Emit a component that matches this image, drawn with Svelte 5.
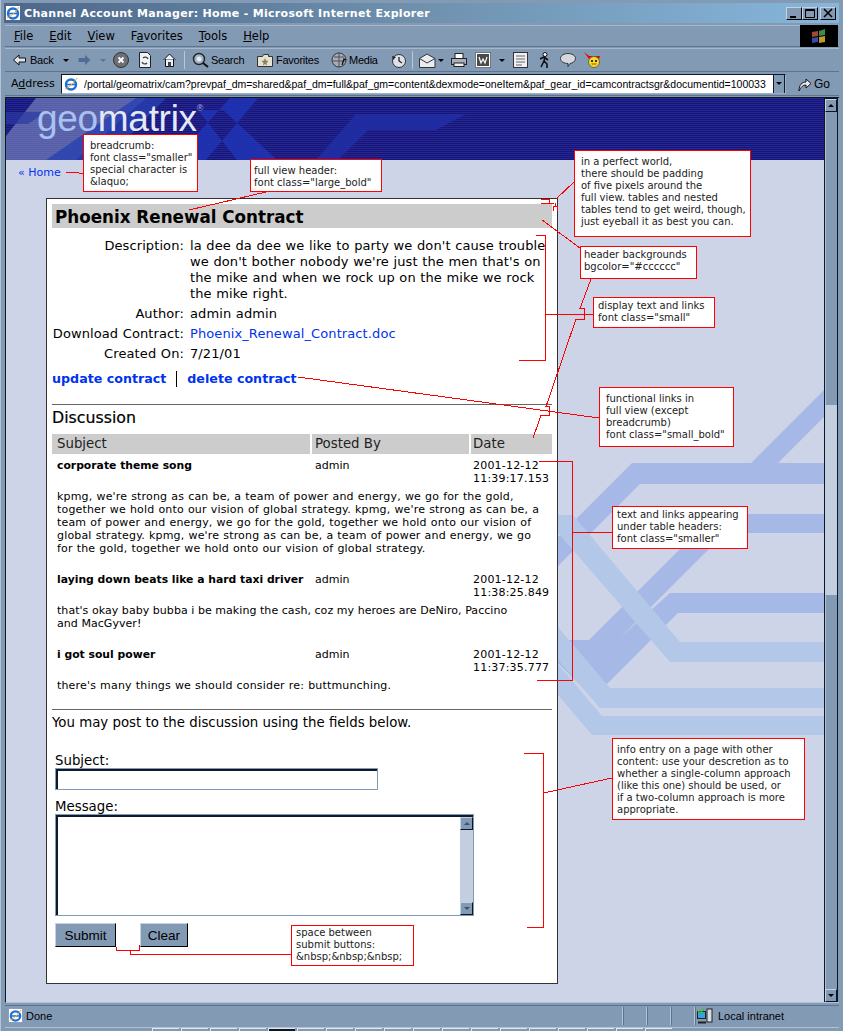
<script lang="ts">
	// IE6 window showing the annotated "full view" wireframe. Window chrome and the
	// page are ordinary flow; the red notes and leader lines sit on top of it.
	const addressUrl =
		'/portal/geomatrix/cam?prevpaf_dm=shared&paf_dm=full&paf_gm=content&dexmode=oneItem&paf_gear_id=camcontractsgr&documentid=100033';

	const posts = [
		{
			subject: 'corporate theme song',
			author: 'admin',
			date: '2001-12-12',
			time: '11:39:17.153',
			body: [
				"kpmg, we're strong as can be, a team of power and energy, we go for the gold,",
				"together we hold onto our vision of global strategy. kpmg, we're strong as can be, a",
				'team of power and energy, we go for the gold, together we hold onto our vision of',
				"global strategy. kpmg, we're strong as can be, a team of power and energy, we go",
				'for the gold, together we hold onto our vision of global strategy.'
			]
		},
		{
			subject: 'laying down beats like a hard taxi driver',
			author: 'admin',
			date: '2001-12-12',
			time: '11:38:25.849',
			tight: true,
			body: ["that's okay baby bubba i be making the cash, coz my heroes are DeNiro, Paccino", 'and MacGyver!']
		},
		{
			subject: 'i got soul power',
			author: 'admin',
			date: '2001-12-12',
			time: '11:37:35.777',
			body: ["there's many things we should consider re: buttmunching."]
		}
	];

	const taskTabs = Array(18).fill(0);
</script>

{#snippet ieLogo(size)}
	<svg width={size} height={size} viewBox="0 0 16 16">
		<rect x="1" y="1" width="14" height="14" fill="#fff" />
		<circle cx="8" cy="8.5" r="5" fill="none" stroke="#1f6fd6" stroke-width="2.4" />
		<path d="M3 8.5h10" stroke="#1f6fd6" stroke-width="1.6" />
		<path d="M2 13C5 12 11 7 14 2" stroke="#e8b030" stroke-width="1" fill="none" />
	</svg>
{/snippet}

<div class="window">
	<div class="titlebar">
		<span class="title-icon">{@render ieLogo(16)}</span>
		<span class="title-text">Channel Account Manager: Home - Microsoft Internet Explorer</span>
		<span class="winbtns">
			<span class="winbtn"><svg width="14" height="11" viewBox="0 0 14 11"><rect x="3" y="8" width="6" height="2" /></svg></span>
			<span class="winbtn"><svg width="14" height="11" viewBox="0 0 14 11"><path d="M2.5 1.5h9v8h-9zM2.5 2.5h9" fill="none" stroke="#000" /></svg></span>
			<span class="winbtn close"><svg width="14" height="11" viewBox="0 0 14 11"><path d="M3 1l8 8M11 1l-8 8" stroke="#000" stroke-width="1.6" /></svg></span>
		</span>
	</div>

	<div class="menubar">
		<span class="m-file"><u>F</u>ile</span>
		<span class="m-item"><u>E</u>dit</span>
		<span class="m-item"><u>V</u>iew</span>
		<span class="m-item">F<u>a</u>vorites</span>
		<span class="m-item"><u>T</u>ools</span>
		<span class="m-item"><u>H</u>elp</span>
		<span class="flagbox">
			<svg width="18" height="16" viewBox="0 0 18 16">
				<path d="M2 4l6-1v5l-6 1z" fill="#a8442f" />
				<path d="M9 3l6-2v6l-6 1z" fill="#3f8a44" />
				<path d="M2 10l6-1v5l-6 1z" fill="#2f4fa8" />
				<path d="M9 9l6-1v6l-6 1z" fill="#c09a30" />
			</svg>
		</span>
	</div>

	<div class="toolbar">
		<svg class="tool" width="13" height="12" viewBox="0 0 13 12"><path d="M.5 6L6 1v3h6.500v4H6v3z" fill="#dfe5ee" stroke="#111" /></svg>
		<span class="lbl w27 m4">Back</span>
		<span class="caret m6"></span>
		<svg class="tool m9" width="13" height="12" viewBox="0 0 13 12"><path d="M12.500 6L7 1v3H.5v4H7v3z" fill="#4f6d96" /></svg>
		<span class="caret dim m9"></span>
		<svg class="tool m7" width="16" height="16" viewBox="0 0 16 16"><circle cx="8" cy="8" r="7.500" fill="#6d6f74" stroke="#333" /><path d="M5.500 5.500l5 5M10.500 5.500l-5 5" stroke="#fff" stroke-width="1.800" /></svg>
		<svg class="tool m10" width="12" height="16" viewBox="0 0 12 16"><path d="M.5.500h8l3 3v12H.5z" fill="#eef1f5" stroke="#222" /><path d="M4 6a3 3 0 0 1 5 1M8 11a3 3 0 0 1-5-1" fill="none" stroke="#444" stroke-width="1.300" /></svg>
		<svg class="tool m12" width="13" height="14" viewBox="0 0 13 14"><path d="M.5 7L6.500 1l6 6M2.500 6v7.500h8V6" fill="#eef1f5" stroke="#111" /><rect x="5" y="9" width="3" height="4.500" fill="#444" /></svg>
		<span class="sep m8"></span>
		<svg class="tool m7" width="17" height="16" viewBox="0 0 17 16"><circle cx="7" cy="7" r="5.500" fill="#9fb0c4" stroke="#222" stroke-width="1.400" /><circle cx="7" cy="7" r="2.500" fill="#e6ebf2" /><path d="M11 11l5 4" stroke="#111" stroke-width="2" /></svg>
		<span class="lbl w40 m2">Search</span>
		<svg class="tool m6" width="16" height="14" viewBox="0 0 16 14"><path d="M.5 3.500h5l1-2h5v2h4v10H.5z" fill="#e6e2cc" stroke="#333" /><path d="M8 5l1 2.500 2.500.5L9.500 10l.5 2.500L8 11l-2 1.500.5-2.500L4.500 8 7 7.500z" fill="#8a8060" /></svg>
		<span class="lbl w48 m3">Favorites</span>
		<svg class="tool m7" width="16" height="16" viewBox="0 0 16 16"><circle cx="8" cy="8" r="7" fill="#a8adb5" stroke="#333" /><path d="M3 5h10M2 9h12M8 1v14" stroke="#4d535c" /><path d="M11 13l2-6 2 1" fill="none" stroke="#111" stroke-width="1.300" /></svg>
		<span class="lbl w36 m2">Media</span>
		<svg class="tool m6" width="15" height="15" viewBox="0 0 15 15"><circle cx="8" cy="8" r="6.500" fill="#dde2e8" stroke="#333" /><path d="M8 4v4l3 2" fill="none" stroke="#222" stroke-width="1.300" /><path d="M1 3l4 1-3 3z" fill="#222" /></svg>
		<span class="sep m6"></span>
		<svg class="tool m6" width="17" height="15" viewBox="0 0 17 15"><path d="M.5 5.500L8 1l8 4.500v9H.5z" fill="#e8ebef" stroke="#333" /><path d="M.5 5.500L8 10l8-4.500" fill="none" stroke="#333" /></svg>
		<span class="caret m2"></span>
		<svg class="tool m7" width="16" height="14" viewBox="0 0 16 14"><rect x="4" y=".5" width="8" height="5" fill="#fff" stroke="#222" /><rect x=".5" y="5.500" width="15" height="6" fill="#a9b0ba" stroke="#222" /><rect x="3" y="10" width="10" height="3.500" fill="#eee" stroke="#222" /></svg>
		<svg class="tool m8" width="16" height="16" viewBox="0 0 16 16"><rect x=".5" y=".5" width="15" height="15" fill="#fff" stroke="#222" stroke-dasharray="1 1" /><rect x="2" y="2" width="12" height="12" fill="#4a4a4a" /><path d="M4 5l2 6 2-4 2 4 2-6" fill="none" stroke="#fff" stroke-width="1.200" /></svg>
		<span class="caret m8"></span>
		<svg class="tool m8" width="15" height="16" viewBox="0 0 15 16"><rect x=".5" y=".5" width="14" height="15" fill="#eef0f3" stroke="#333" /><path d="M3 4h9M3 7h9M3 10h9M3 13h6" stroke="#666" /></svg>
		<svg class="tool m10" width="13" height="16" viewBox="0 0 13 16"><circle cx="7" cy="2.500" r="2" fill="#fff" stroke="#111" /><path d="M7 5L6 9l3 3v4M6 9l-3 6M2 7l4-2 4 3" fill="none" stroke="#111" stroke-width="1.600" /></svg>
		<svg class="tool m9" width="16" height="14" viewBox="0 0 16 14"><path d="M8 .5c4 0 7.500 2 7.500 5S12 10.500 10 10.500L8 13.500v-3c-4 0-7.500-2-7.500-5S4 .5 8 .5z" fill="#d4d8de" stroke="#333" /></svg>
		<svg class="tool m8" width="17" height="16" viewBox="0 0 17 16"><path d="M0 0l5 4h11l-1 3H5z" fill="#e00" /><circle cx="10" cy="10" r="5.500" fill="#f4e020" stroke="#665" /><circle cx="8" cy="9" r="1" /><circle cx="12" cy="9" r="1" /><path d="M7.500 12h5" stroke="#c33" /></svg>
	</div>

	<div class="addressbar">
		<span class="addr-label">A<u>d</u>dress</span>
		<div class="addr-box">
			<span class="addr-icon">{@render ieLogo(16)}</span>
			<span class="addr-url">{addressUrl}</span>
			<span class="addr-drop"><i></i></span>
		</div>
		<span class="go">
			<svg width="14" height="16" viewBox="0 0 14 16"><path d="M1 15c0-6 3-9 7-9V3l5 4.500L8 12V9c-3 0-5 2-7 6z" fill="#e8ebef" stroke="#111" /></svg>
			Go
		</span>
	</div>

	<div class="viewport">
		<div class="page">
			<svg class="backdrop" width="818" height="905" viewBox="6 98 818 905">
				<g fill="#a6b9e6">
					<path d="M824 390v27l-46 46h46v21H640l-82 82v-29l74-74h119z" />
					<path d="M715 514H824v19H725L598 660H558v-20h31z" />
					<path d="M670 593H824v20H678l-72 72H580l-22-22v-3h37z" />
				</g>
				<g fill="#b3c8e8">
					<path d="M558 515h15l107 127h144v20H670L558 533z" />
					<path d="M558 627l52 61h214v20H600l-42-48z" />
					<path d="M558 664l44 52h222v19H592l-34-40z" />
				</g>
			</svg>

			<div class="banner">
				<svg class="banner-art" width="818" height="62" viewBox="0 0 818 62">
					<path d="M30 0h110L70 62H0V38z" fill="#8d9cc8" opacity=".55" />
					<path d="M0 14h40L22 26H0z" fill="#2a3aa0" opacity=".7" />
					<path d="M130 0h30l-60 62H40z" fill="#2840b0" opacity=".8" />
					<path d="M192 12h25l54 50h-40zM252 0h-28l-56 62h32z" fill="#1f36b8" opacity=".8" />
					<path d="M350 16h110l-30 16H362l-30 30h-22z" fill="#2030a8" opacity=".8" />
				</svg>
				<span class="logo"><span class="logo-geo">geo</span>matrix<sup>®</sup></span>
			</div>

			<div class="crumb"><a href="#home">« Home</a></div>

			<div class="card">
				<h1>Phoenix Renewal Contract</h1>

				<dl class="details">
					<dt>Description:</dt>
					<dd>
						la dee da dee we like to party we don't cause trouble<br />we don't bother nobody we're just the men that's on<br />the mike and when we rock up on the mike we rock<br />the mike right.
					</dd>
					<dt>Author:</dt>
					<dd>admin admin</dd>
					<dt>Download Contract:</dt>
					<dd><a href="#doc">Phoenix_Renewal_Contract.doc</a></dd>
					<dt>Created On:</dt>
					<dd>7/21/01</dd>
				</dl>

				<div class="actions">
					<a href="#update">update contract</a>
					<span class="divider"></span>
					<a href="#delete">delete contract</a>
				</div>

				<hr class="rule-a" />
				<h2>Discussion</h2>

				<div class="thead">
					<div>Subject</div>
					<div>Posted By</div>
					<div>Date</div>
				</div>

				{#each posts as post}
					<div class="post">
						<div class="post-head">
							<b>{post.subject}</b>
							<span>{post.author}</span>
							<span class="stamp">{post.date}<br />{post.time}</span>
						</div>
						<p class:tight={post.tight}>
							{#each post.body as line}{line}<br />{/each}
						</p>
					</div>
				{/each}

				<hr class="rule-b" />
				<p class="invite">You may post to the discussion using the fields below.</p>

				<form class="entry">
					<label for="subject">Subject:</label>
					<input id="subject" type="text" />
					<label for="message" class="msg-label">Message:</label>
					<div class="textbox">
						<textarea id="message"></textarea>
						<div class="textbox-scroll">
							<span class="sbtn"><i class="up"></i></span>
							<span class="sbtn"><i class="down"></i></span>
						</div>
					</div>
					<div class="buttons">
						<button type="button" class="submit">Submit</button>
						<button type="button" class="clear">Clear</button>
					</div>
				</form>
			</div>
		</div>

		<div class="scrollbar">
			<span class="sbtn big"><i class="up"></i></span>
			<span class="thumb a"></span>
			<span class="track"></span>
			<span class="thumb b"></span>
			<span class="sbtn big"><i class="down"></i></span>
		</div>
	</div>

	<div class="statusbar">
		<span class="status-icon">{@render ieLogo(15)}</span>
		<span class="status-text">Done</span>
		<span class="panel p1"></span>
		<span class="panel p2"></span>
		<span class="panel p3"></span>
		<span class="panel zone">
			<svg width="16" height="16" viewBox="0 0 16 16"><rect x=".5" y="3.500" width="8" height="7" fill="#3aa0e0" stroke="#222" /><rect x="10" y="1" width="5" height="13" fill="#d8dde4" stroke="#222" /><path d="M1 14.500h8" stroke="#222" stroke-width="2" /><path d="M1 3l2 2 4-4" stroke="#2c2" stroke-width="1.500" fill="none" /></svg>
			<span>Local intranet</span>
		</span>
	</div>

	<div class="taskstrip">
		{#each taskTabs as _, i}
			<span class="tab" class:on={i === 4}></span>
		{/each}
	</div>

	<!-- leader lines of the annotations -->
	<svg class="leaders" width="843" height="1031" viewBox="0 0 843 1031">
		<g fill="none" stroke="#f00" stroke-width="1" shape-rendering="crispEdges">
			<path d="M65.500 172.500h9l9 1" />
			<path d="M189 210L266 192" />
			<path d="M541 199.500h8v3.500h-8M549 203h4.500M553.500 211v-5h4v5M555.500 206v-3" />
			<path d="M556 199L574 182" />
			<path d="M542 220L580 248" />
			<path d="M536 235.500h9.500V360.500H519M545.500 314.500H593" />
			<path d="M591 279L580 308.500h4.500v10.500H576L546 406.500h3.500V415.500H541L533 438" />
			<path d="M298 377L599 418" />
			<path d="M539 461.500h33.500V680.500H537M572.500 532.500H612" />
			<path d="M524 753.500h19.500V927.500H527M543.500 793L612 778" />
			<path d="M116.500 947v3.500h22.500V945M130.500 950.500v4H291" />
		</g>
	</svg>

	<div class="note n-crumb">breadcrumb:<br />font class="smaller"<br />special character is<br />&amp;laquo;</div>
	<div class="note n-header">full view header:<br />font class="large_bold"</div>
	<div class="note n-padding">in a perfect world,<br />there should be padding<br />of five pixels around the<br />full view. tables and nested<br />tables tend to get weird, though,<br />just eyeball it as best you can.</div>
	<div class="note n-bg">header backgrounds<br />bgcolor="#cccccc"</div>
	<div class="note n-display">display text and links<br />font class="small"</div>
	<div class="note n-func">functional links in<br />full view (except<br />breadcrumb)<br />font class="small_bold"</div>
	<div class="note n-under">text and links appearing<br />under table headers:<br />font class="smaller"</div>
	<div class="note n-info">info entry on a page with other<br />content: use your descretion as to<br />whether a single-column approach<br />(like this one) should be used, or<br />if a two-column approach is more<br />appropriate.</div>
	<div class="note n-space">space between<br />submit buttons:<br />&amp;nbsp;&amp;nbsp;&amp;nbsp;</div>
</div>

<style>
	:global(body) {
		margin: 0;
		background: #839ab5;
	}
	.window {
		position: relative;
		display: flex;
		flex-direction: column;
		width: 843px;
		height: 1031px;
		box-sizing: border-box;
		padding: 3px 4px 0;
		overflow: hidden;
		background: #839ab5;
		border-left: 1px solid #b4c2d4;
		font-family: 'DejaVu Sans', sans-serif;
		color: #000;
	}
	.window > * {
		flex: none;
	}

	/* title bar */
	.titlebar {
		display: flex;
		align-items: center;
		height: 20px;
		margin-left: -1px;
		background: linear-gradient(90deg, #4c678a, #6f91ae 50%, #86b6da);
		color: #fff;
	}
	.title-icon {
		display: flex;
		margin-left: 1px;
	}
	.title-text {
		margin-left: 3px;
		font-size: 11px;
		font-weight: 700;
		letter-spacing: 0.32px;
	}
	.winbtns {
		display: flex;
		margin-left: auto;
		margin-right: 3px;
	}
	.winbtn {
		display: flex;
		width: 16px;
		height: 13px;
		box-sizing: border-box;
		background: #839ab5;
		border: 1px solid;
		border-color: #c6d2e0 #000 #000 #c6d2e0;
	}
	.winbtn svg {
		fill: #000;
	}
	.winbtn.close {
		margin-left: 2px;
	}

	/* menu */
	.menubar {
		display: flex;
		align-items: center;
		height: 22px;
		margin-top: 2px;
		border-top: 1px solid #a8b8cc;
		border-bottom: 1px solid #5d7490;
		font-size: 11.5px;
		box-sizing: border-box;
	}
	.m-file {
		margin-left: 9px;
	}
	.m-item {
		margin-left: 16px;
	}
	.flagbox {
		display: flex;
		align-items: center;
		justify-content: center;
		width: 38px;
		height: 22px;
		margin-left: auto;
		margin-right: 1px;
		background: #000;
	}

	/* toolbar */
	.toolbar {
		display: flex;
		align-items: center;
		height: 24px;
		margin-top: 1px;
		padding-left: 8px;
		box-sizing: border-box;
		border-top: 1px solid #a8b8cc;
		border-bottom: 1px solid #5d7490;
	}
	.tool {
		flex: none;
	}
	.lbl {
		flex: none;
		font-family: 'Liberation Sans', sans-serif;
		font-size: 11px;
		line-height: 16px;
		letter-spacing: -0.25px;
	}
	.w27 { width: 27px; }
	.w36 { width: 36px; }
	.w40 { width: 40px; }
	.w48 { width: 48px; }
	.m2 { margin-left: 2px; }
	.m3 { margin-left: 3px; }
	.m4 { margin-left: 4px; }
	.m6 { margin-left: 6px; }
	.m7 { margin-left: 7px; }
	.m8 { margin-left: 8px; }
	.m9 { margin-left: 9px; }
	.m10 { margin-left: 10px; }
	.m12 { margin-left: 12px; }
	.caret {
		flex: none;
		width: 0;
		height: 0;
		border: 3px solid transparent;
		border-top: 3px solid #000;
		border-bottom: 0;
	}
	.caret.dim {
		border-top-color: #5c7391;
	}
	.sep {
		flex: none;
		width: 1px;
		height: 18px;
		background: #b8c6d6;
	}

	/* address */
	.addressbar {
		display: flex;
		align-items: center;
		height: 24px;
		border-bottom: 1px solid #5d7490;
		box-sizing: border-box;
	}
	.addr-label {
		width: 50px;
		margin-left: 6px;
		font-size: 11px;
	}
	.addr-box {
		display: flex;
		align-items: center;
		width: 725px;
		height: 20px;
		box-sizing: border-box;
		background: #fff;
		border: 1px solid;
		border-color: #0e1a2c #9fb0c4 #9fb0c4 #0e1a2c;
	}
	.addr-icon {
		display: flex;
		margin-left: 1px;
	}
	.addr-url {
		flex: 1;
		min-width: 0;
		margin-left: 5px;
		overflow: hidden;
		white-space: nowrap;
		font-family: 'Liberation Sans', sans-serif;
		font-size: 10.5px;
	}
	.addr-drop {
		display: flex;
		flex: none;
		align-items: center;
		justify-content: center;
		width: 12px;
		height: 18px;
		background: #839ab5;
		border-left: 1px solid #0e1a2c;
		border-right: 1px solid #0e1a2c;
		box-sizing: border-box;
	}
	.addr-drop i {
		border: 3px solid transparent;
		border-top: 3px solid #000;
		border-bottom: 0;
	}
	.go {
		display: flex;
		align-items: center;
		gap: 2px;
		margin-left: 12px;
		font-family: 'Liberation Sans', sans-serif;
		font-size: 12px;
	}

	/* browser viewport */
	.viewport {
		display: flex;
		height: 906px;
		margin: 1px 0 0 0;
		box-sizing: border-box;
		border-top: 1px solid #0c1626;
		border-left: 1px solid #0c1626;
		border-bottom: 1px solid #b4c2d4;
		overflow: hidden;
	}
	.page {
		position: relative;
		flex: none;
		width: 818px;
		background: #ced4e8;
	}
	.backdrop {
		position: absolute;
		top: 0;
		left: 0;
	}
	.banner {
		position: relative;
		height: 62px;
		overflow: hidden;
		background: repeating-linear-gradient(0deg, #16167a 0 1px, #262690 1px 2px);
	}
	.banner-art {
		position: absolute;
		top: 0;
		left: 0;
	}
	.logo {
		position: absolute;
		left: 31px;
		top: 0;
		font-family: 'Liberation Sans', sans-serif;
		font-size: 37px;
		line-height: 42px;
		color: #e4e9f6;
		letter-spacing: -0.3px;
	}
	.logo-geo {
		color: #a9c2f2;
	}
	.logo sup {
		position: absolute;
		top: 5px;
		font-size: 9px;
		line-height: 10px;
		color: #9fb0dc;
	}
	.crumb {
		position: relative;
		height: 16px;
		margin-top: 5px;
		padding-left: 12px;
		font-size: 11px;
		line-height: 16px;
	}
	a {
		color: #0033ee;
		text-decoration: none;
	}
	.card {
		position: relative;
		width: 512px;
		height: 786px;
		box-sizing: border-box;
		margin: 17px 0 0 40px;
		padding: 5px;
		background: #fff;
		border: 1px solid #333;
		font-size: 13.33px;
		line-height: 16px;
	}
	h1 {
		height: 24px;
		margin: 0;
		padding-left: 3px;
		background: #ccc;
		font-size: 16.75px;
		line-height: 27px;
		font-weight: 700;
	}
	.details {
		display: grid;
		grid-template-columns: 132px 1fr;
		column-gap: 6px;
		row-gap: 4px;
		margin: 9px 0 0;
		padding-top: 1px;
		font-size: 13px;
		letter-spacing: 0.1px;
		word-spacing: 0.35px;
	}
	.details dt {
		text-align: right;
		white-space: nowrap;
	}
	.details dd {
		margin: 0;
		white-space: nowrap;
	}
	.actions {
		display: flex;
		align-items: center;
		height: 16px;
		margin-top: 9px;
		font-size: 12.67px;
		font-weight: 700;
	}
	.divider {
		width: 1px;
		height: 16px;
		margin: 0 10px;
		background: #000;
	}
	hr {
		height: 1px;
		margin: 0;
		border: 0;
		background: #666;
	}
	.rule-a {
		margin-top: 17px;
	}
	h2 {
		margin: 5px 0 0;
		font-size: 15.8px;
		line-height: 16px;
		font-weight: 400;
		-webkit-text-stroke: 0.2px #000;
	}
	.thead {
		display: grid;
		grid-template-columns: 258px 157px 81px;
		column-gap: 2px;
		margin-top: 8px;
	}
	.thead div {
		height: 20px;
		background: #ccc;
		font-size: 13.33px;
		line-height: 20px;
		color: #222;
	}
	.thead div:nth-child(1) {
		padding-left: 5px;
	}
	.thead div:nth-child(2) {
		padding-left: 3px;
	}
	.thead div:nth-child(3) {
		padding-left: 2px;
	}
	.post {
		margin-bottom: 18px;
		font-size: 11px;
		line-height: 13px;
	}
	.thead + .post {
		margin-top: 5px;
	}
	.post:last-of-type {
		margin-bottom: 0;
	}
	.post-head {
		display: grid;
		grid-template-columns: 258px 159px 81px;
		column-gap: 0;
	}
	.post-head b {
		padding-left: 5px;
		white-space: nowrap;
		font-size: 10.8px;
	}
	.post-head span:nth-child(2) {
		padding-left: 5px;
	}
	.post-head .stamp {
		padding-left: 4px;
		white-space: nowrap;
		letter-spacing: 0.2px;
	}
	.post p {
		margin: 5px 0 0;
		padding-left: 5px;
		white-space: nowrap;
		letter-spacing: 0.17px;
		word-spacing: 0.4px;
	}
	.post p.tight {
		letter-spacing: 0.05px;
		word-spacing: 0;
	}
	.rule-b {
		margin-top: 17px;
	}
	.invite {
		margin: 5px 0 0;
		line-height: 16px;
	}
	.entry {
		display: flex;
		flex-direction: column;
		align-items: flex-start;
		margin: 21px 0 0 3px;
	}
	label {
		height: 16px;
		line-height: 18px;
	}
	.msg-label {
		margin-top: 8px;
	}
	input {
		width: 323px;
		height: 22px;
		box-sizing: border-box;
		margin: 0;
		background: #fff;
		border: 1px solid #839ab5;
		box-shadow: inset 2px 2px 0 #0e1a2c;
		outline: 0;
	}
	.textbox {
		display: flex;
		width: 419px;
		height: 102px;
		box-sizing: border-box;
		padding: 2px 0 0 2px;
		background: #0e1a2c;
		border: 1px solid #839ab5;
	}
	textarea {
		flex: 1;
		min-width: 0;
		margin: 0;
		padding: 0;
		border: 0;
		outline: 0;
		resize: none;
		background: #fff;
	}
	.textbox-scroll {
		display: flex;
		flex-direction: column;
		justify-content: space-between;
		width: 13px;
		background: #c3cfdf;
	}
	.sbtn {
		display: flex;
		align-items: center;
		justify-content: center;
		flex: none;
		height: 13px;
		box-sizing: border-box;
		background: #839ab5;
		border: 1px solid;
		border-color: #c6d2e0 #0c1626 #0c1626 #c6d2e0;
	}
	.sbtn i {
		border: 3px solid transparent;
	}
	.sbtn i.up {
		border-top: 0;
		border-bottom: 3px solid #3d506a;
	}
	.sbtn i.down {
		border-bottom: 0;
		border-top: 3px solid #3d506a;
	}
	.buttons {
		display: flex;
		gap: 24px;
		margin-top: 7px;
	}
	button {
		height: 24px;
		padding: 0;
		box-sizing: border-box;
		background: #839ab5;
		border: 1px solid;
		border-color: #c6d2e0 #000 #000 #c6d2e0;
		font-family: 'Liberation Sans', sans-serif;
		font-size: 13.5px;
		color: #000;
	}
	.submit {
		width: 61px;
	}
	.clear {
		width: 48px;
	}

	/* main scrollbar */
	.scrollbar {
		display: flex;
		flex-direction: column;
		flex: none;
		width: 14px;
		box-sizing: border-box;
		padding: 1px 1px 0;
		background: #0c1626;
	}
	.sbtn.big i.up {
		border-bottom-color: #000;
	}
	.sbtn.big i.down {
		border-top-color: #000;
	}
	.thumb {
		display: block;
		background: #839ab5;
		box-shadow: inset 1px 0 0 #b4c2d4;
	}
	.thumb.a {
		height: 293px;
	}
	.thumb.b {
		flex: 1;
	}
	.track {
		display: block;
		height: 190px;
		background: #c3cfdf;
	}

	/* status bar */
	.statusbar {
		position: relative;
		display: flex;
		align-items: center;
		height: 20px;
		margin-top: 2px;
		box-sizing: border-box;
		border-top: 1px solid #5d7490;
		font-family: 'Liberation Sans', sans-serif;
		font-size: 11px;
	}
	.status-icon {
		display: flex;
		margin-left: 3px;
	}
	.status-text {
		width: 596px;
		margin-left: 3px;
	}
	.panel {
		box-sizing: border-box;
		width: 24px;
		height: 18px;
		border-left: 1px solid #b4c2d4;
		box-shadow: inset 1px 0 0 #5d7490;
	}
	.panel.zone {
		display: flex;
		align-items: center;
		gap: 5px;
		width: 144px;
		padding-left: 2px;
	}
	.taskstrip {
		display: flex;
		height: 4px;
		margin-top: 2px;
		padding-left: 147px;
		gap: 2px;
		box-sizing: border-box;
		border-top: 1px solid #b4c2d4;
	}
	.tab {
		width: 27px;
		height: 3px;
		border-left: 1px solid #dfe6ee;
		border-top: 1px solid #dfe6ee;
		box-sizing: border-box;
	}
	.tab.on {
		background: #0c1626;
	}

	/* annotations */
	.leaders {
		position: absolute;
		top: 0;
		left: -1px;
		pointer-events: none;
	}
	.note {
		position: absolute;
		box-sizing: border-box;
		padding: 5px 0 0 6px;
		background: #fff;
		border: 1px solid #f00;
		font-family: 'DejaVu Sans', sans-serif;
		font-size: 10px;
		line-height: 12px;
		color: #222;
		white-space: nowrap;
	}
	.n-crumb { left: 82px; top: 134px; width: 115px; height: 58px; }
	.n-header { left: 249px; top: 159px; width: 132px; height: 33px; padding-left: 3px; }
	.n-padding { left: 573px; top: 150px; width: 177px; height: 87px; }
	.n-bg { left: 579px; top: 246px; width: 117px; height: 33px; padding-left: 3px; padding-top: 2px; }
	.n-display { left: 592px; top: 297px; width: 122px; height: 31px; padding-left: 4px; padding-top: 2px; }
	.n-func { left: 598px; top: 387px; width: 135px; height: 60px; }
	.n-under { left: 611px; top: 506px; width: 136px; height: 43px; padding-left: 4px; padding-top: 2px; }
	.n-info { left: 611px; top: 738px; width: 193px; height: 82px; padding-left: 4px; }
	.n-space { left: 290px; top: 925px; width: 123px; height: 41px; padding-left: 4px; padding-top: 1px; }
</style>
